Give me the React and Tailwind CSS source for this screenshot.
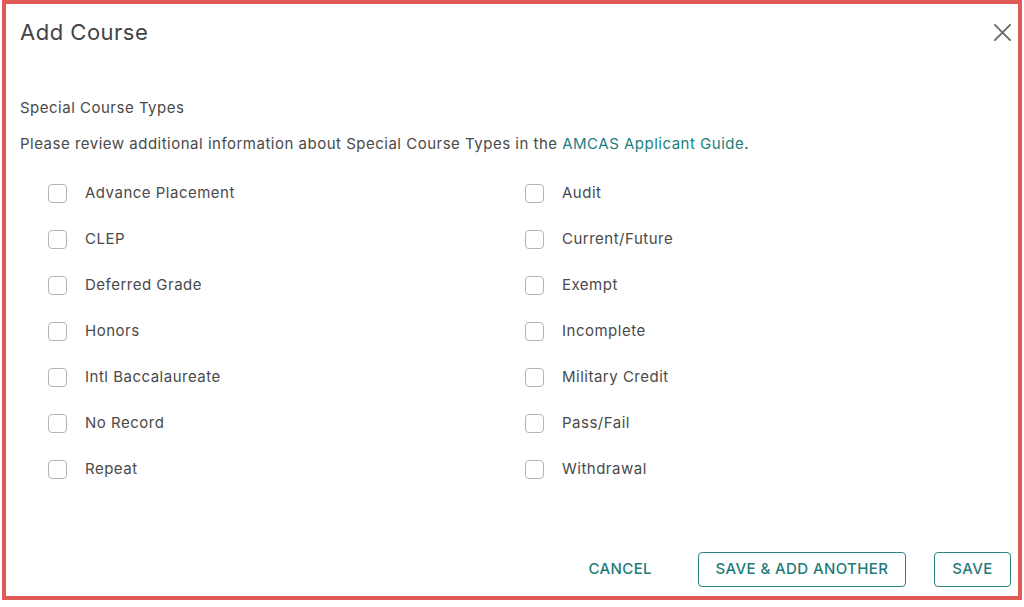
import React from "react";

const left = ["Advance Placement", "CLEP", "Deferred Grade", "Honors", "Intl Baccalaureate", "No Record", "Repeat"];
const right = ["Audit", "Current/Future", "Exempt", "Incomplete", "Military Credit", "Pass/Fail", "Withdrawal"];

function Item({ label }) {
  return (
    <label className="flex items-center h-[46px] gap-[18px] cursor-pointer">
      <span className="w-[19px] h-[19px] rounded-[4px] border border-[#b5b5b5] bg-white shrink-0" />
      <span className="text-[15px] text-[#4a4a4a] tracking-[0.5px]">{label}</span>
    </label>
  );
}

export default function App() {
  const rows = [];
  for (let i = 0; i < left.length; i++) {
    rows.push(<Item key={"l" + i} label={left[i]} />);
    rows.push(<Item key={"r" + i} label={right[i]} />);
  }
  return (
    <div className="w-[1024px] h-[607px] bg-white" style={{ fontFamily: "Inter, 'Liberation Sans', sans-serif" }}>
      <div className="ml-[2px] w-[1020px] h-[600px] border-[4px] border-[#e05a57] flex flex-col bg-white">
        <div className="flex items-center justify-between pl-[14px] pr-[6px] pt-[8px] h-[40px] box-content">
          <h1 className="text-[22px] leading-[28px] text-[#454545] tracking-[0.5px]">Add Course</h1>
          <svg width="19" height="19" viewBox="0 0 20 20" className="text-[#6b6b6b]">
            <path d="M2 2 L18 18 M18 2 L2 18" stroke="currentColor" strokeWidth="2" strokeLinecap="round" />
          </svg>
        </div>
        <div className="pl-[14px] pt-[46px] text-[15px] leading-[20px] text-[#4a4a4a] tracking-[0.5px]">Special Course Types</div>
        <div className="pl-[14px] pt-[16px] text-[15px] leading-[20px] text-[#4a4a4a] tracking-[0.5px]">
          Please review additional information about Special Course Types in the{" "}
          <a className="text-[#1b7f7c]" href="#">AMCAS Applicant Guide</a>.
        </div>
        <div className="pl-[42px] pt-[16px] grid grid-cols-[477px_1fr]">{rows}</div>
        <div className="flex-1" />
        <div className="flex items-center justify-end gap-[28px] pr-[7px] pb-[9px]">
          <button className="text-[15px] font-medium text-[#1f7b78] tracking-[0.4px] px-[10px] h-[35px] mr-[8px]">CANCEL</button>
          <button className="text-[15px] font-medium text-[#1f7b78] tracking-[0.4px] w-[208px] h-[35px] border border-[#2b8582] rounded-[4px]">SAVE &amp; ADD ANOTHER</button>
          <button className="text-[15px] font-medium text-[#1f7b78] tracking-[0.4px] w-[77px] h-[35px] border border-[#2b8582] rounded-[4px]">SAVE</button>
        </div>
      </div>
    </div>
  );
}
